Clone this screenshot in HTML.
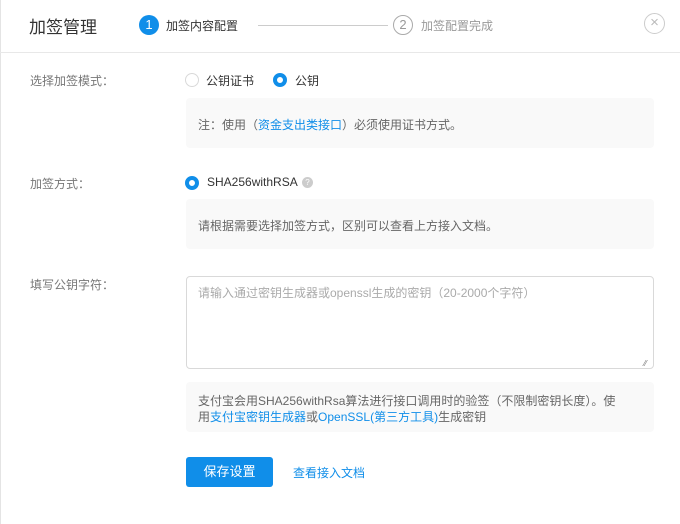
<!DOCTYPE html>
<html><head><meta charset="utf-8"><style>
*{margin:0;padding:0;box-sizing:border-box}
body{width:680px;height:524px;background:#fff;font-family:"Liberation Sans","Noto Sans CJK SC",sans-serif;font-size:12px;color:#333;position:relative;overflow:hidden}
.a{position:absolute;white-space:nowrap}
.hd{position:absolute;left:0;top:0;width:680px;height:53px;border-bottom:1px solid #e8e8e8}
.lbl{color:#777;font-size:12px}
.box{position:absolute;left:186px;width:468px;background:#f9f9f9;border-radius:4px;color:#666}
.blue{color:#108ee9}
.rad{position:absolute;width:14px;height:14px;border-radius:50%;border:1px solid #d9d9d9;background:#fff}
.rad.on{border:4px solid #108ee9}
</style></head><body>
<div class="a" style="left:0;top:0;width:1px;height:524px;background:#e4e4e4"></div>
<div class="hd"></div>
<div class="a" style="left:29px;top:13px;font-size:17px;color:#333">加签管理</div>
<div class="a" style="left:139px;top:15px;width:20px;height:20px;border-radius:50%;background:#108ee9;color:#fff;text-align:center;line-height:20px;font-size:13px">1</div>
<div class="a" style="left:166px;top:17px;font-size:12px;color:#333">加签内容配置</div>
<div class="a" style="left:258px;top:25px;width:130px;height:1px;background:#ccc"></div>
<div class="a" style="left:393px;top:15px;width:20px;height:20px;border-radius:50%;border:1px solid #aaa;color:#999;text-align:center;line-height:18px;font-size:13px">2</div>
<div class="a" style="left:421px;top:17px;font-size:12px;color:#999">加签配置完成</div>
<div class="a" style="left:644px;top:13px;width:21px;height:21px;border-radius:50%;border:1px solid #ccc;color:#bbb;text-align:center;line-height:18px;font-size:15px">×</div>

<div class="a lbl" style="left:30px;top:72px">选择加签模式：</div>
<div class="rad" style="left:185px;top:73px"></div>
<div class="a" style="left:206px;top:72px">公钥证书</div>
<div class="rad on" style="left:273px;top:73px"></div>
<div class="a" style="left:295px;top:72px">公钥</div>
<div class="box" style="top:98px;height:50px"><div class="a" style="left:12px;top:18px">注：使用（<span class="blue">资金支出类接口</span>）必须使用证书方式。</div></div>

<div class="a lbl" style="left:30px;top:175px">加签方式：</div>
<div class="rad on" style="left:185px;top:176px"></div>
<div class="a" style="left:207px;top:175px">SHA256withRSA</div>
<div class="a" style="left:302px;top:177px;width:11px;height:11px;border-radius:50%;background:#ccc;color:#fff;font-size:8px;text-align:center;line-height:11px">?</div>
<div class="box" style="top:199px;height:50px"><div class="a" style="left:12px;top:18px">请根据需要选择加签方式，区别可以查看上方接入文档。</div></div>

<div class="a lbl" style="left:30px;top:276px">填写公钥字符：</div>
<div class="a" style="left:186px;top:276px;width:468px;height:93px;border:1px solid #d9d9d9;border-radius:4px"></div>
<div class="a" style="left:198px;top:284px;color:#aaa">请输入通过密钥生成器或openssl生成的密钥（20-2000个字符）</div>
<div class="a" style="left:644px;top:359px;color:#777;font-size:8px">⁄⁄</div>

<div class="box" style="top:382px;height:50px"><div class="a" style="left:12px;top:11px;line-height:16px">支付宝会用SHA256withRsa算法进行接口调用时的验签（不限制密钥长度）。使<br>用<span class="blue">支付宝密钥生成器</span>或<span class="blue">OpenSSL(第三方工具)</span>生成密钥</div></div>

<div class="a" style="left:186px;top:457px;width:87px;height:30px;background:#108ee9;border-radius:3px;color:#fff;text-align:center;line-height:30px;font-size:13px">保存设置</div>
<div class="a blue" style="left:293px;top:464px;font-size:12px">查看接入文档</div>
</body></html>
